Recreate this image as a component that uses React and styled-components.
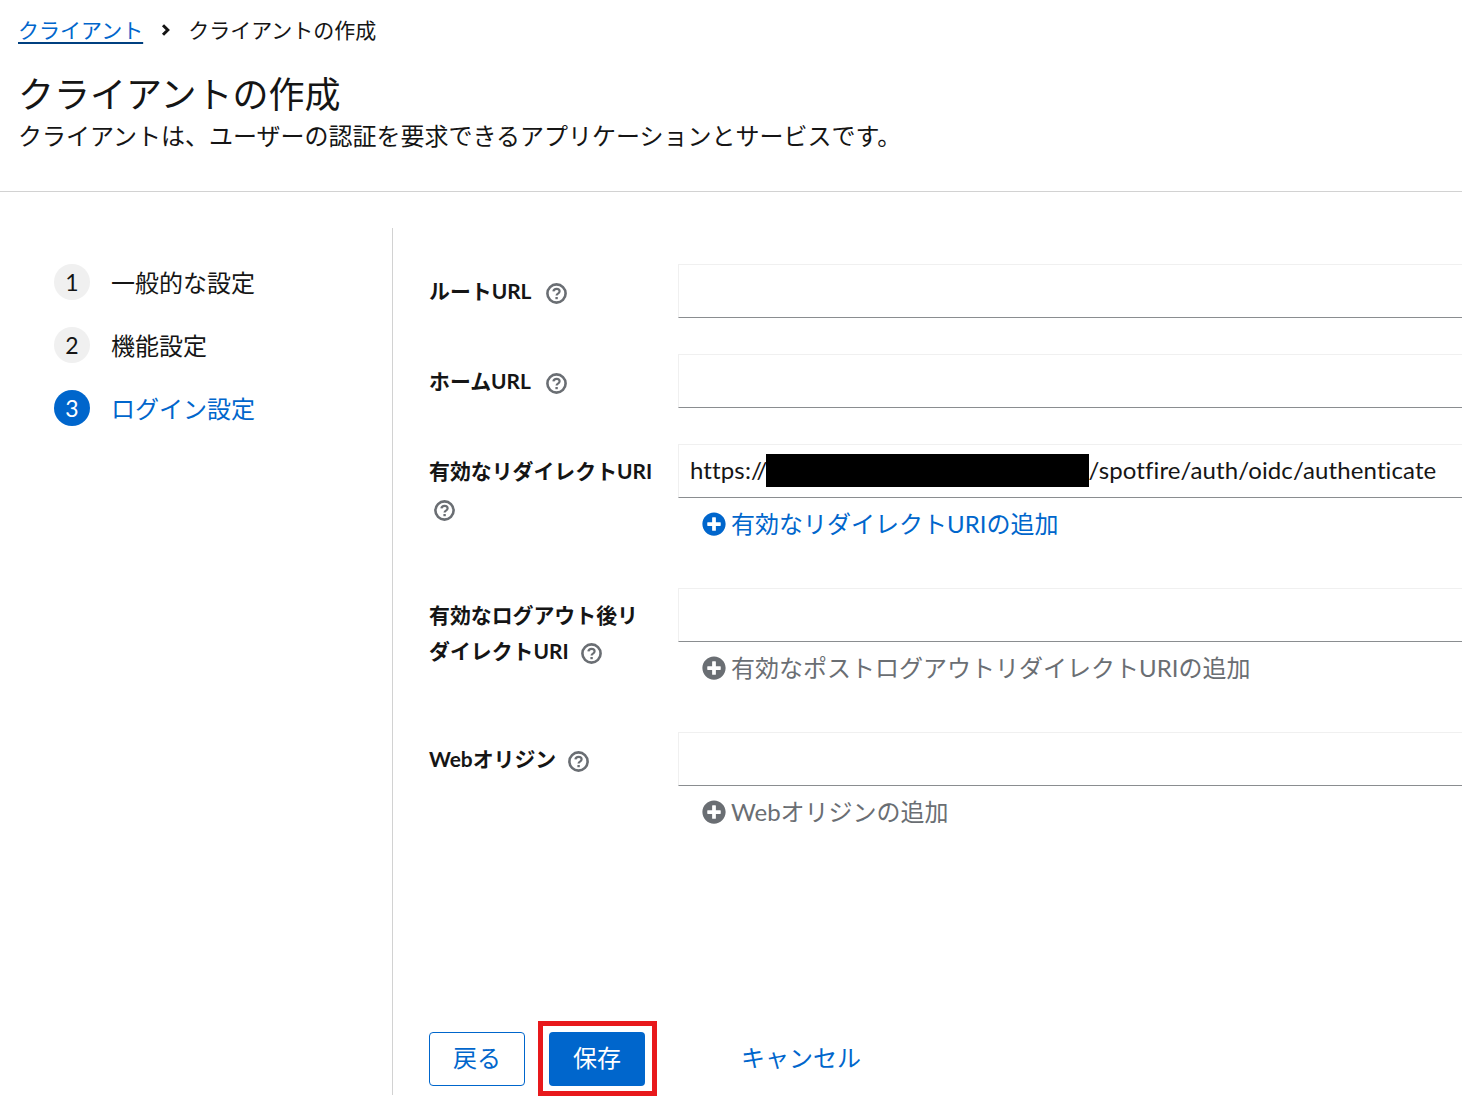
import React from "react";
import styled, { createGlobalStyle } from "styled-components";
import { FaPlusCircle } from "react-icons/fa";

const Global = createGlobalStyle`
  html, body { margin: 0; padding: 0; background: #fff; }
  body { font-family: "Lato", "Noto Sans CJK JP", sans-serif; color: #151515; font-variant-ligatures: none; }
  * { box-sizing: border-box; }
`;
const Page = styled.div`
  width: 1462px; height: 1097px; overflow: hidden; display: flex; flex-direction: column;
`;
const Header = styled.header`
  height: 192px; border-bottom: 1px solid #d2d2d2; padding: 14px 20px 0 18px; flex: none;
`;
const Crumbs = styled.nav`
  display: flex; align-items: center; font-size: 21px; line-height: 32px;
`;
const CrumbLink = styled.a`
  color: #06c; text-decoration: underline; text-decoration-color: #004080; text-decoration-thickness: 2px;
  text-underline-offset: 4px;
`;
const CrumbSep = styled.span`
  display: flex; width: 45px; justify-content: center;
`;
const Chevron = styled.svg`
  width: 11px; height: 12px;
`;
const Title = styled.h1`
  margin: 24px 0 0; font-size: 36px; line-height: 48px; font-weight: 400;
`;
const Subtitle = styled.p`
  margin: 0; font-size: 24px; line-height: 36px;
`;
const Wizard = styled.div`
  flex: 1; display: flex; margin: 36px 0 2px; min-height: 0;
`;
const Side = styled.aside`
  width: 393px; flex: none; border-right: 1px solid #d2d2d2; padding: 36px 0 0 54px;
  display: flex; flex-direction: column; gap: 27px;
`;
const Step = styled.div`
  height: 36px; display: flex; align-items: center; gap: 21px; font-size: 24px; line-height: 36px;
  color: ${p => (p.$active ? "#06c" : "#151515")};
`;
const StepLabel = styled.span`
  margin-top: 2px;
`;
const StepNum = styled.span`
  width: 36px; height: 36px; border-radius: 50%; display: flex; align-items: center; justify-content: center;
  background: ${p => (p.$active ? "#06c" : "#f0f0f0")}; color: ${p => (p.$active ? "#fff" : "#151515")};
  font-size: 23px;
`;
const Main = styled.main`
  flex: 1; min-width: 0; padding: 36px 0 9px 36px; display: flex; flex-direction: column;
`;
const Form = styled.div`
  display: flex; flex-direction: column; gap: 36px;
`;
const Row = styled.div`
  display: grid; grid-template-columns: 249px 1fr;
`;
const Label = styled.div`
  padding: 9px 22px 0 0; font-size: 20.9px; line-height: 36px; font-weight: 700; color: #151515;
`;
const HelpIcon = styled.svg`
  display: inline-block; width: 21px; height: 21px; margin-left: ${p => p.$gap}px;
  vertical-align: ${p => (p.$gap < 10 ? "-6px" : "-5px")};
`;
const Input = styled.div`
  height: 54px; border: 1px solid #f0f0f0; border-right: 0; border-bottom: 1px solid #8a8d90;
  padding: 0 0 0 11px; font-size: 24px; line-height: 50px; white-space: nowrap; color: #151515;
  overflow: hidden; background: #fff; letter-spacing: 0.12px;
`;
const Redacted = styled.span`
  display: inline-block; width: 323px; height: 33px; margin-left: -2px; background: #000; vertical-align: -8px;
`;
const AddButton = styled.div`
  height: 54px; display: flex; align-items: center; gap: 5px; padding: 0 0 6px 24px; font-size: 24px;
  color: ${p => (p.$disabled ? "#6a6e73" : "#06c")};
`;
const AddIcon = styled.span`
  display: flex; font-size: 24px; margin-top: 4px; color: ${p => (p.$disabled ? "#6a6e73" : "#06c")};
`;
const Footer = styled.div`
  margin-top: auto; display: flex; align-items: center; gap: 24px;
`;
const Button = styled.button`
  height: 54px; width: 96px; border-radius: 4px; font: inherit; font-size: 24px; padding: 0 0 6px;
  border: ${p => (p.$primary ? "0" : "1px solid #06c")};
  background: ${p => (p.$primary ? "#06c" : "#fff")};
  color: ${p => (p.$primary ? "#fff" : "#06c")};
`;
const Highlight = styled.span`
  position: relative; display: flex;
  &::after {
    content: ""; position: absolute; inset: -11px -11.5px -10px -11.5px; border: 5px solid #e8191c; pointer-events: none;
  }
`;
const Cancel = styled.a`
  margin-left: 72px; padding-bottom: 6px; font-size: 24px; color: #06c;
`;

const Hlp = ({ gap = 12 }) => (
  <HelpIcon $gap={gap} viewBox="0 0 21 21" fill="none" stroke="#6a6e73">
    <circle cx="10.5" cy="10.5" r="9.1" strokeWidth="2.6" />
    <path d="M7.4 8.4c.2-1.7 1.5-2.6 3.2-2.6 1.8 0 3 1 3 2.5 0 1.2-.7 1.8-1.6 2.3-.9.5-1.4 1-1.4 2" strokeWidth="2.2" />
    <path d="M10.6 14v2.2" strokeWidth="2.4" />
  </HelpIcon>
);
const Add = ({ disabled, children }) => (
  <AddButton $disabled={disabled}>
    <AddIcon $disabled={disabled}><FaPlusCircle /></AddIcon>
    {children}
  </AddButton>
);

export default function App() {
  return (
    <Page>
      <Global />
      <Header>
        <Crumbs>
          <CrumbLink>クライアント</CrumbLink>
          <CrumbSep>
            <Chevron viewBox="0 0 11 12" fill="none" stroke="#151515" strokeWidth="3">
              <path d="M3 1.2l4.8 4.8-4.8 4.8" />
            </Chevron>
          </CrumbSep>
          <span>クライアントの作成</span>
        </Crumbs>
        <Title>クライアントの作成</Title>
        <Subtitle>クライアントは、ユーザーの認証を要求できるアプリケーションとサービスです。</Subtitle>
      </Header>
      <Wizard>
        <Side>
          <Step><StepNum>1</StepNum><StepLabel>一般的な設定</StepLabel></Step>
          <Step><StepNum>2</StepNum><StepLabel>機能設定</StepLabel></Step>
          <Step $active><StepNum $active>3</StepNum><StepLabel>ログイン設定</StepLabel></Step>
        </Side>
        <Main>
          <Form>
            <Row>
              <Label>ルートURL<Hlp gap={15} /></Label>
              <Input />
            </Row>
            <Row>
              <Label>ホームURL<Hlp gap={15} /></Label>
              <Input />
            </Row>
            <Row>
              <Label>有効なリダイレクトURI<Hlp gap={5} /></Label>
              <div>
                <Input>https://<Redacted />/spotfire/auth/oidc/authenticate</Input>
                <Add>有効なリダイレクトURIの追加</Add>
              </div>
            </Row>
            <Row>
              <Label>有効なログアウト後リダイレクトURI<Hlp /></Label>
              <div>
                <Input />
                <Add disabled>有効なポストログアウトリダイレクトURIの追加</Add>
              </div>
            </Row>
            <Row>
              <Label>Webオリジン<Hlp /></Label>
              <div>
                <Input />
                <Add disabled>Webオリジンの追加</Add>
              </div>
            </Row>
          </Form>
          <Footer>
            <Button>戻る</Button>
            <Highlight><Button $primary>保存</Button></Highlight>
            <Cancel>キャンセル</Cancel>
          </Footer>
        </Main>
      </Wizard>
    </Page>
  );
}
